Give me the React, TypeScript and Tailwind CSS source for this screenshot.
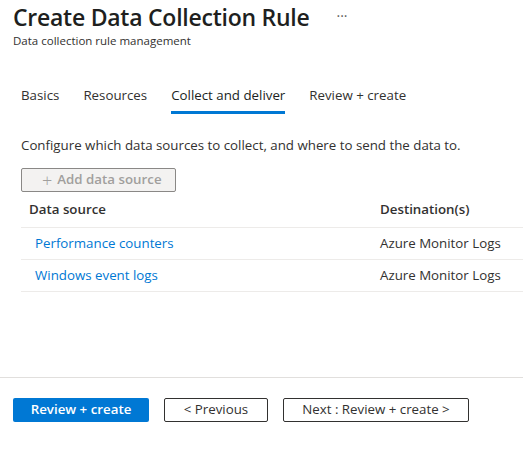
import React from "react";

export default function App() {
  const font = { fontFamily: '"Open Sans", "Noto Sans", sans-serif' };
  return (
    <div className="w-[523px] h-[452px] bg-white text-[#323130] flex flex-col" style={font}>
      <div className="flex-1 flex flex-col">
        <div className="pl-[13px] pt-[1px] flex items-center">
          <h1 className="text-[23px] leading-[32px] font-semibold text-[#201f1e] tracking-[-0.25px]">Create Data Collection Rule</h1>
          <span className="ml-[27px] text-[14px] text-[#605e5c] leading-none mt-[-2px]">···</span>
        </div>
        <div className="pl-[13px] text-[11.5px] leading-[16px] text-[#323130]">Data collection rule management</div>

        <div className="mt-[36px] pl-[21px] flex gap-[24px] text-[13.3px] leading-[20px]">
          <div className="pb-[9px]">Basics</div>
          <div className="pb-[9px]">Resources</div>
          <div className="pb-[6px] border-b-[3px] border-[#0078d4] text-[#201f1e]">Collect and deliver</div>
          <div className="pb-[9px]">Review + create</div>
        </div>

        <div className="mt-[21px] pl-[21px] text-[13.3px] leading-[20px]">
          Configure which data sources to collect, and where to send the data to.
        </div>

        <div className="mt-[13px] pl-[21px]">
          <div className="w-[155px] h-[24px] bg-[#f3f2f1] border border-[#8a8886] rounded-[2px] flex items-center pl-[20px] text-[13.3px] text-[#a19f9d]">
            <span className="text-[18px] leading-none mr-[5px] font-light">+</span>
            <span className="font-semibold">Add data source</span>
          </div>
        </div>

        <div className="ml-[21px] mt-[1px] text-[13.3px]">
          <div className="h-[35px] flex items-center border-b border-[#edebe9] font-semibold">
            <div className="w-[359px] pl-[8px]">Data source</div>
            <div>Destination(s)</div>
          </div>
          <div className="h-[32px] flex items-center border-b border-[#edebe9]">
            <div className="w-[359px] pl-[14px] text-[#0078d4]">Performance counters</div>
            <div>Azure Monitor Logs</div>
          </div>
          <div className="h-[32px] flex items-center border-b border-[#edebe9]">
            <div className="w-[359px] pl-[14px] text-[#0078d4]">Windows event logs</div>
            <div>Azure Monitor Logs</div>
          </div>
        </div>
      </div>

      <div className="h-[75px] border-t border-[#e1dfdd] shrink-0">
        <div className="mt-[20px] pl-[13px] flex gap-[15px] text-[13.3px]">
          <div className="w-[136px] h-[24px] bg-[#0078d4] text-white font-semibold rounded-[2px] flex items-center justify-center">Review + create</div>
          <div className="w-[104px] h-[24px] border border-[#323130] rounded-[2px] flex items-center justify-center">&lt; Previous</div>
          <div className="w-[186px] h-[24px] border border-[#323130] rounded-[2px] flex items-center justify-center">Next : Review + create &gt;</div>
        </div>
      </div>
    </div>
  );
}
